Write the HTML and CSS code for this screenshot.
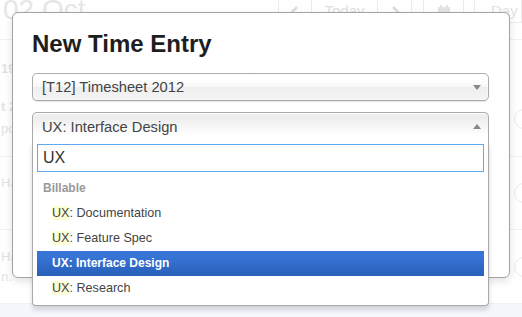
FILE: index.html
```html
<!DOCTYPE html>
<html>
<head>
<meta charset="utf-8">
<title>New Time Entry</title>
<link rel="stylesheet" href="styles.css">
</head>
<body>
<div class="page">
  <div class="topbar">
    <div class="date">02 Oct</div>
    <div class="toolbar">
      <div class="btn-group">
        <span class="btn btn-nav"><svg width="10" height="12" viewBox="0 0 10 12"><path d="M7 1 L2 6 L7 11" fill="none" stroke="#dcdcdc" stroke-width="2.6"/></svg></span>
        <span class="btn btn-today">Today</span>
        <span class="btn btn-nav"><svg width="10" height="12" viewBox="0 0 10 12"><path d="M3 1 L8 6 L3 11" fill="none" stroke="#dcdcdc" stroke-width="2.6"/></svg></span>
      </div>
      <span class="btn btn-cal"><svg width="14" height="14" viewBox="0 0 14 14"><rect x="1" y="3" width="12" height="10" fill="#e4e4e4"/><rect x="3" y="1" width="2" height="3" fill="#e4e4e4"/><rect x="9" y="1" width="2" height="3" fill="#e4e4e4"/></svg></span>
      <span class="btn btn-day">Day</span>
    </div>
  </div>
  <div class="rows">
    <div class="row row-a">
      <div class="row-text">
        <span class="faint-bold num">19</span>
        <span class="faint-bold line-t">t 2</span>
        <span class="faint line-po">po</span>
      </div>
      <span class="clock"></span>
    </div>
    <div class="row row-b">
      <div class="row-text">
        <span class="faint">Ha</span>
      </div>
      <span class="clock"></span>
    </div>
    <div class="row row-c">
      <div class="row-text">
        <span class="faint">Ha</span>
        <span class="faint line-n">n.</span>
      </div>
      <span class="clock"></span>
    </div>
  </div>
  <div class="footer-strip"></div>
</div>

<div class="modal">
  <h1 class="modal-title">New Time Entry</h1>
  <div class="chosen">
    <div class="chosen-single">
      <span>[T12] Timesheet 2012</span>
      <b class="arrow arrow-down"></b>
    </div>
  </div>
  <div class="chosen chosen-open">
    <div class="chosen-single">
      <span>UX: Interface Design</span>
      <b class="arrow arrow-up"></b>
    </div>
    <div class="chosen-drop">
      <div class="chosen-search">
        <input class="search-input" type="text" value="UX">
      </div>
      <ul class="chosen-results">
        <li class="group-result">Billable</li>
        <li class="result group-option"><em>UX</em>: Documentation</li>
        <li class="result group-option"><em>UX</em>: Feature Spec</li>
        <li class="result group-option highlighted"><em>UX</em>: Interface Design</li>
        <li class="result group-option"><em>UX</em>: Research</li>
      </ul>
    </div>
  </div>
</div>
</body>
</html>
```

FILE: styles.css
```css
html, body {
  margin: 0;
  padding: 0;
  width: 522px;
  height: 317px;
  overflow: hidden;
  background: #fff;
  font-family: "Liberation Sans", Arial, sans-serif;
}

.page {
  display: flex;
  flex-direction: column;
  height: 317px;
}

/* ---- faded background page ---- */
.topbar {
  display: flex;
  align-items: flex-start;
  height: 48px;
  margin-top: -8px;
  border-bottom: 1px solid #f1f1f1;
  box-sizing: border-box;
  flex: none;
}

.date {
  font-size: 28px;
  line-height: 36px;
  color: #e6e6e6;
  padding-left: 3px;
}

.toolbar {
  margin-left: auto;
  display: flex;
  gap: 10px;
}

.btn-group {
  display: flex;
  margin-right: 1px;
}

.btn {
  height: 31px;
  box-sizing: border-box;
  border: 1px solid #ececec;
  display: flex;
  align-items: flex-end;
  justify-content: center;
  padding-bottom: 4px;
  color: #e2e2e2;
  font-size: 15px;
  line-height: 15px;
}

.btn-group .btn + .btn {
  border-left: none;
}

.btn-nav { width: 34px; }
.btn-today { width: 66px; }
.btn-cal { width: 41px; }
.btn-day { width: 48px; justify-content: flex-start; padding-left: 16px; }

.rows {
  display: flex;
  flex-direction: column;
  flex: none;
}

.row {
  display: flex;
  justify-content: space-between;
  align-items: flex-start;
  border-bottom: 1px solid #f1f1f1;
  box-sizing: border-box;
}

.row-a { height: 117px; }
.row-b { height: 73px; }
.row-c { height: 74px; }

.row-text {
  display: flex;
  flex-direction: column;
  padding-left: 1px;
  font-size: 13px;
  line-height: 16px;
}

.faint { color: #e2e2e2; }
.faint-bold { color: #e2e2e2; font-weight: bold; }

.row-a .row-text { padding-top: 21px; }
.line-t { margin-top: 22px; }
.line-po { margin-top: 6px; }
.row-b .row-text { padding-top: 18px; }
.row-c .row-text { padding-top: 19px; }
.line-n { margin-top: 4px; }

.clock {
  width: 20px;
  height: 20px;
  box-sizing: border-box;
  border: 1.5px solid #ebebeb;
  border-radius: 50%;
  margin-right: -12px;
  position: relative;
  flex: none;
}

.clock::after {
  content: "";
  position: absolute;
  left: 8.5px;
  top: 3px;
  width: 1.5px;
  height: 7px;
  background: #ebebeb;
}

.row-a .clock { margin-top: 69px; }
.row-b .clock { margin-top: 26px; }
.row-c .clock { margin-top: 27px; }

.footer-strip {
  flex: 1;
  background: #f4f8fc;
}

/* ---- modal ---- */
.modal {
  position: absolute;
  left: 12px;
  top: 12px;
  width: 498px;
  height: 266px;
  box-sizing: border-box;
  background: #fff;
  border: 1px solid #a4a4a4;
  border-radius: 6px;
  box-shadow: 0 3px 8px rgba(0, 0, 0, 0.12);
  padding: 17px 20px 0 19px;
}

.modal-title {
  margin: 0;
  font-size: 24px;
  line-height: 28px;
  font-weight: bold;
  color: #1e1e1e;
}

.chosen {
  position: relative;
  margin-top: 15px;
  font-size: 14.7px;
  color: #444;
}

.chosen + .chosen {
  margin-top: 11px;
}

.chosen-single {
  height: 28px;
  box-sizing: border-box;
  border: 1px solid #aaa;
  border-radius: 5px;
  padding: 0 7px 0 9px;
  line-height: 26px;
  display: flex;
  align-items: center;
  justify-content: space-between;
  background: linear-gradient(#fff 20%, #f6f6f6 50%, #eee 52%, #f4f4f4 100%);
  box-shadow: inset 0 0 3px #fff, 0 1px 1px rgba(0, 0, 0, 0.1);
}

.chosen-open .chosen-single {
  height: 29px;
  border-bottom: none;
  border-bottom-left-radius: 0;
  border-bottom-right-radius: 0;
  background: linear-gradient(#eee 20%, #fff 80%);
  box-shadow: inset 0 1px 0 #fff;
  line-height: 28px;
}

.arrow {
  width: 0;
  height: 0;
  border-left: 4px solid transparent;
  border-right: 4px solid transparent;
}

.arrow-down { border-top: 5px solid #888; margin-top: 1px; }
.arrow-up { border-bottom: 5px solid #888; margin-top: -2px; }

.chosen-drop {
  position: absolute;
  top: 100%;
  left: 0;
  right: 0;
  background: #fff;
  border: 1px solid #aaa;
  border-top: none;
  border-radius: 0 0 4px 4px;
  box-shadow: 0 4px 5px rgba(0, 0, 0, 0.15);
  z-index: 5;
}

.chosen-search {
  padding: 3px 4px 4px;
}

.search-input {
  display: block;
  width: 100%;
  height: 28px;
  box-sizing: border-box;
  margin: 0;
  border: 1px solid #5ea9f0;
  border-radius: 0;
  padding: 0 5px;
  font-family: "Liberation Sans", Arial, sans-serif;
  font-size: 16px;
  color: #333;
  background: #fff;
  outline: none;
}

.chosen-results {
  list-style: none;
  margin: 0 4px 4px 0;
  padding: 0 0 0 4px;
}

.chosen-results li {
  padding: 5px 6px;
  line-height: 15px;
  font-size: 12.6px;
  color: #444;
}

.chosen-results .group-result {
  font-weight: bold;
  font-size: 12px;
  color: #999;
}

.chosen-results .group-option {
  padding-left: 15px;
}

.chosen-results em {
  font-style: normal;
  background: #fdfdd6;
}

.chosen-results .highlighted {
  background: linear-gradient(#3875d7 20%, #2a62bc 90%);
  color: #fff;
  font-weight: bold;
  font-size: 12px;
}

.chosen-results .highlighted em {
  background: transparent;
}
```
